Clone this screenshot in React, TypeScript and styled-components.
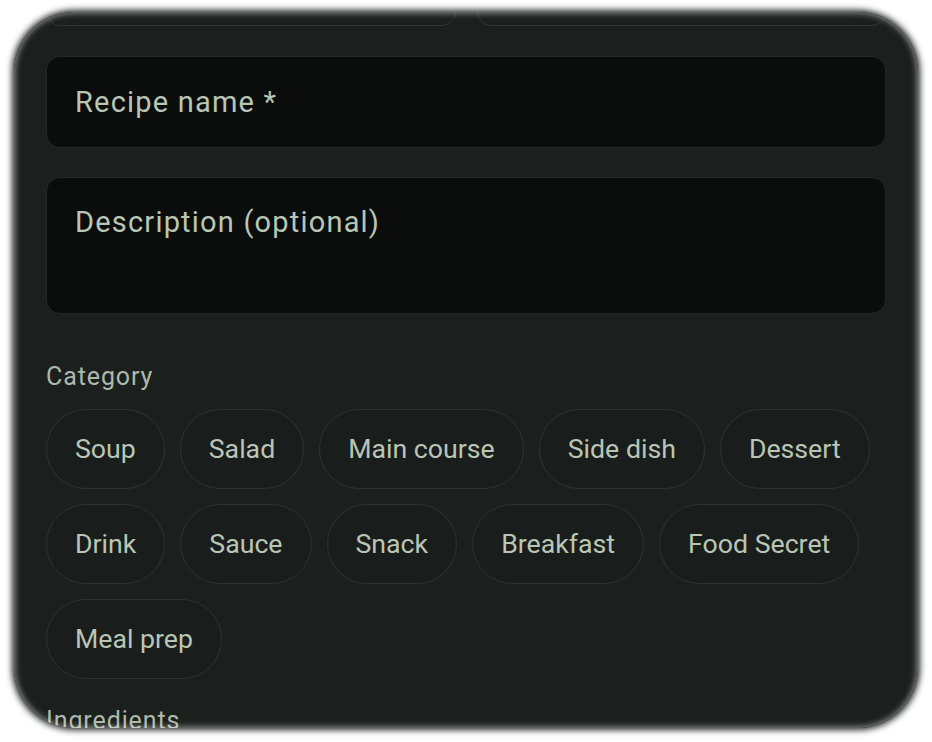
import React from 'react'
import styled, { createGlobalStyle } from 'styled-components'

const PANEL = '#1b1f1e'
const FIELD = '#0b0d0c'
const TEXT = '#b9c6b5'

const GlobalStyle = createGlobalStyle`
  html, body {
    margin: 0;
    background: #ffffff;
    font-family: Roboto, "Noto Sans", sans-serif;
  }
`

const Page = styled.div`
  padding: 12px 14px;
`

const Panel = styled.div`
  position: relative;
  height: 716px;
  border-radius: 60px;
  background: ${PANEL};
  overflow: hidden;
  box-shadow: 0 0 6px 2px rgba(27, 31, 30, 0.95);

  &::after {
    content: '';
    position: absolute;
    inset: 0;
    border-radius: inherit;
    box-shadow: inset 0 0 6px 1px rgba(255, 255, 255, 0.55);
    pointer-events: none;
  }
`

const Scroll = styled.div`
  margin-top: -62px;
  padding: 0 32px;
  display: flex;
  flex-direction: column;
`

const TopRow = styled.div`
  display: grid;
  grid-template-columns: 1fr 1fr;
  column-gap: 21px;
  margin-bottom: 30px;
`

const OutlinedField = styled.div`
  height: 76px;
  box-sizing: border-box;
  border: 1px solid #313735;
  border-radius: 14px;
`

const Field = styled.div<{ $height: number; $multiline?: boolean }>`
  height: ${(p) => p.$height}px;
  box-sizing: border-box;
  background: ${FIELD};
  border: 1px solid #242927;
  border-radius: 14px;
  padding: ${(p) => (p.$multiline ? '27px 28px 0' : '0 28px')};
  display: flex;
  align-items: ${(p) => (p.$multiline ? 'flex-start' : 'center')};
  color: ${TEXT};
  font-size: 29px;
  letter-spacing: 1.2px;
  line-height: 34px;
  margin-bottom: 29px;
`

const Label = styled.div<{ $top: number }>`
  color: #adb9aa;
  font-size: 25px;
  letter-spacing: 0.9px;
  line-height: 32px;
  margin-top: ${(p) => p.$top}px;
`

const Chips = styled.div`
  display: flex;
  flex-wrap: wrap;
  gap: 15px 15px;
  margin-top: 16px;
`

const Chip = styled.div`
  height: 80px;
  box-sizing: border-box;
  padding: 0 28px;
  display: flex;
  align-items: center;
  border: 1px solid #2f3432;
  border-radius: 40px;
  background: #191d1c;
  color: ${TEXT};
  font-size: 26.7px;
`

const categories = [
  'Soup',
  'Salad',
  'Main course',
  'Side dish',
  'Dessert',
  'Drink',
  'Sauce',
  'Snack',
  'Breakfast',
  'Food Secret',
  'Meal prep',
]

export default function App() {
  return (
    <Page>
      <GlobalStyle />
      <Panel>
        <Scroll>
          <TopRow>
            <OutlinedField />
            <OutlinedField />
          </TopRow>
          <Field $height={92}>Recipe name *</Field>
          <Field $height={137} $multiline>
            Description (optional)
          </Field>
          <Label $top={18}>Category</Label>
          <Chips>
            {categories.map((c) => (
              <Chip key={c}>{c}</Chip>
            ))}
          </Chips>
          <Label $top={26}>Ingredients</Label>
        </Scroll>
      </Panel>
    </Page>
  )
}
